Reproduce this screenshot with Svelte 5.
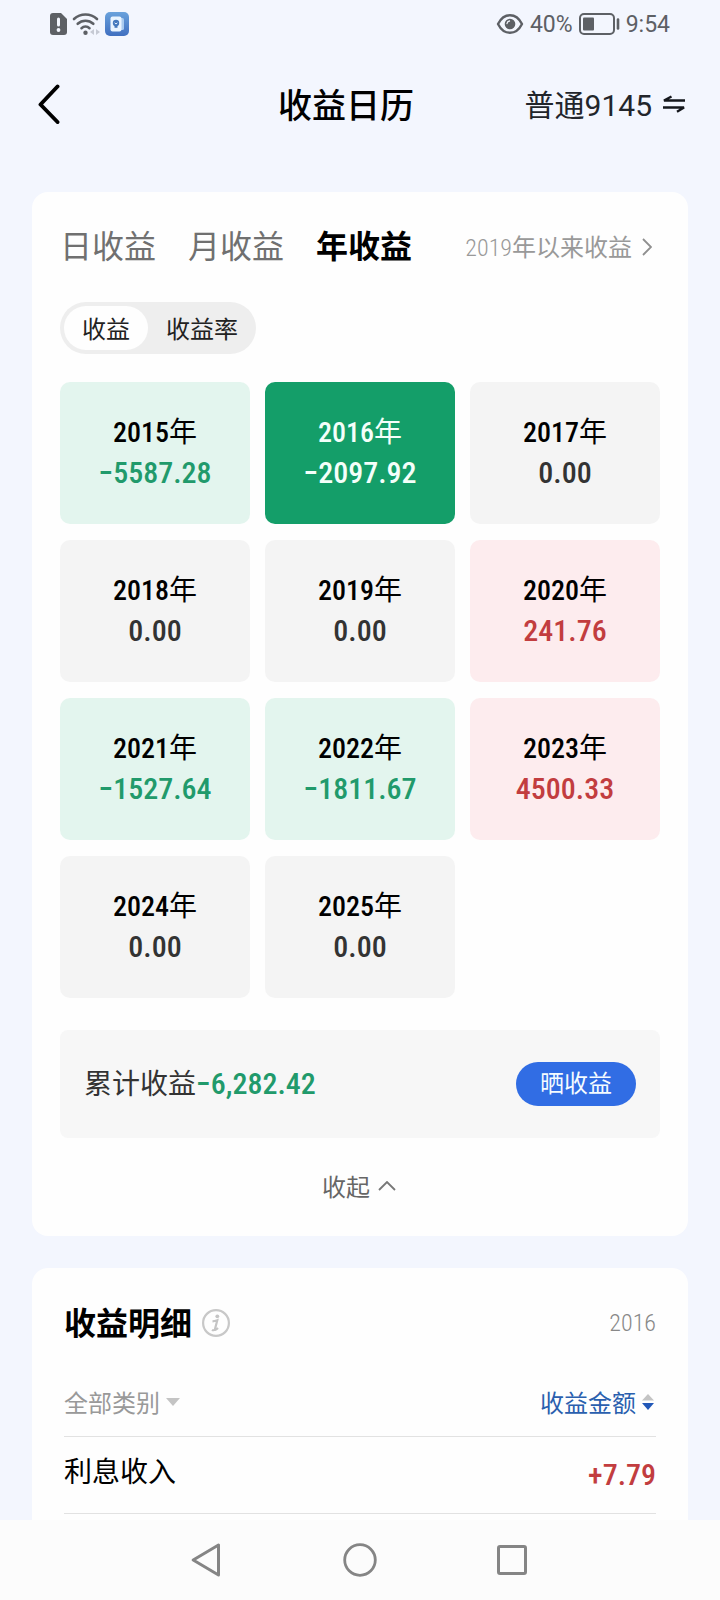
<script>
  const years = [
    { year: 2015, value: -5587.28 },
    { year: 2016, value: -2097.92 },
    { year: 2017, value: 0 },
    { year: 2018, value: 0 },
    { year: 2019, value: 0 },
    { year: 2020, value: 241.76 },
    { year: 2021, value: -1527.64 },
    { year: 2022, value: -1811.67 },
    { year: 2023, value: 4500.33 },
    { year: 2024, value: 0 },
    { year: 2025, value: 0 }
  ];
  const tabs = ['日收益', '月收益', '年收益'];
  const modes = ['收益', '收益率'];

  let selected = $state(2016);
  let tab = $state('年收益');
  let mode = $state('收益');

  const tone = (v) => (v < 0 ? 'loss' : v > 0 ? 'gain' : 'flat');
  const format = (v) => (v < 0 ? '−' : '') + Math.abs(v).toFixed(2);
</script>

<div class="screen">
  <div class="status">
    <div class="status-group left">
      <svg width="17" height="22" viewBox="0 0 17 22">
        <path d="M3 0h8l6 6v13a3 3 0 0 1-3 3H3a3 3 0 0 1-3-3V3a3 3 0 0 1 3-3z" fill="#5d6065" />
        <path d="M8.500 6v6" stroke="#f3f6fe" stroke-width="3" stroke-linecap="round" />
        <circle cx="8.500" cy="17" r="1.900" fill="#f3f6fe" />
      </svg>
      <svg width="28" height="24" viewBox="0 0 28 24">
        <g fill="none" stroke="#5d6065" stroke-width="2.600" stroke-linecap="round">
          <path d="M2 7a17 17 0 0 1 23 0" />
          <path d="M5.700 11.800a11.500 11.500 0 0 1 15.600 0" />
          <path d="M9.500 16.200a6 6 0 0 1 8 0" />
        </g>
        <circle cx="13.500" cy="20.800" r="2.200" fill="#5d6065" />
        <path d="M22 17v6l-4-3zM24 17v6l4-3z" fill="#c6cad4" />
      </svg>
      <svg width="24" height="24" viewBox="0 0 24 24">
        <defs>
          <linearGradient id="app-tile" x1="0" y1="0" x2="0" y2="1">
            <stop offset="0" stop-color="#6aa2dc" />
            <stop offset="1" stop-color="#406fc0" />
          </linearGradient>
        </defs>
        <rect width="24" height="24" rx="5" fill="url(#app-tile)" />
        <rect x="9" y="6" width="10" height="12" rx="1.500" fill="#a9cbf0" />
        <rect x="5.500" y="4.500" width="11" height="15" rx="2" fill="#e9f4ff" />
        <circle cx="11" cy="11" r="3.200" fill="#4478bd" />
        <path d="M9.500 13h3v2.800h-3z" fill="#4478bd" />
        <path d="M9.600 10.800l1.400 1.200 1.400-1.200" fill="none" stroke="#e9f4ff" />
      </svg>
    </div>
    <div class="status-group right">
      <svg width="28" height="22" viewBox="0 0 28 22">
        <path d="M2 11C5 5 9.500 2.200 14 2.200S23 5 26 11c-3 6-7.500 8.800-12 8.800S5 17 2 11z" fill="none" stroke="#5d6065" stroke-width="2.400" stroke-linejoin="round" />
        <circle cx="14" cy="11" r="5.300" fill="#5d6065" />
        <path d="M11 10.500a3 3 0 0 1 2.500-2.500" fill="none" stroke="#f3f6fe" stroke-width="1.300" stroke-linecap="round" />
      </svg>
      <span>40%</span>
      <svg width="41" height="22" viewBox="0 0 41 22">
        <rect x="1" y="1" width="34" height="20" rx="4" fill="none" stroke="#5d6065" stroke-width="2" />
        <rect x="4" y="4.500" width="11" height="13" rx="1" fill="#5d6065" />
        <path d="M39 6.500v9" stroke="#5d6065" stroke-width="2.600" stroke-linecap="round" />
      </svg>
      <span>9:54</span>
    </div>
  </div>

  <main>
    <header>
      <button class="back" aria-label="返回">
        <svg width="22" height="40" viewBox="0 0 22 40">
          <path d="M19.500 2.500L2.500 20.500l17 17.500" fill="none" stroke="#000" stroke-width="3.900" stroke-linecap="round" stroke-linejoin="round" />
        </svg>
      </button>
      <h1>收益日历</h1>
      <button class="account">
        <span>普通<span class="latin">9145</span></span>
        <svg width="24" height="18" viewBox="0 0 24 18">
          <path d="M23 5.500H2L9.500 1.500M1 12.500h21L15 16.800" fill="none" stroke="#15171c" stroke-width="2.400" stroke-linejoin="bevel" />
        </svg>
      </button>
    </header>

    <section class="card calendar">
      <div class="top">
        <nav class="tabs">
          {#each tabs as name}
            <button class:active={tab === name} onclick={() => (tab = name)}>{name}</button>
          {/each}
        </nav>
        <a class="since" href="#since">
          <span><span class="digits">2019</span>年以来收益</span>
          <svg width="10" height="18" viewBox="0 0 10 18">
            <path d="M1 1l8 8-8 8" fill="none" stroke="#8f8f8f" stroke-width="1.800" />
          </svg>
        </a>
      </div>

      <div class="segment">
        {#each modes as name}
          <button class:active={mode === name} onclick={() => (mode = name)}>{name}</button>
        {/each}
      </div>

      <div class="grid">
        {#each years as item}
          <button
            class="cell {tone(item.value)}"
            class:selected={selected === item.year}
            onclick={() => (selected = item.year)}
          >
            <span class="year">{item.year}<span class="unit">年</span></span>
            <span class="value">{format(item.value)}</span>
          </button>
        {/each}
      </div>

      <div class="total">
        <p>累计收益<strong>−6,282.42</strong></p>
        <button>晒收益</button>
      </div>

      <button class="fold">
        <span>收起</span>
        <svg width="18" height="10" viewBox="0 0 18 10">
          <path d="M1 9l8-8 8 8" fill="none" stroke="#777" stroke-width="1.800" />
        </svg>
      </button>
    </section>

    <section class="card details">
      <div class="details-head">
        <h2>收益明细</h2>
        <button class="info" aria-label="说明">
          <svg width="28" height="28" viewBox="0 0 28 28">
            <circle cx="14" cy="14" r="12.900" fill="none" stroke="#c8c8c8" stroke-width="2.200" />
            <circle cx="15.300" cy="7.300" r="1.900" fill="#c4c4c4" />
            <path d="M10.500 12.300c1.600 0 3-.4 4.800-1L13 20c-.3 1.400 1 1 3-1M13 20c-.5 1.500-2 1.500-3 .8" fill="none" stroke="#c4c4c4" stroke-width="2.200" />
          </svg>
        </button>
        <span class="period">2016</span>
      </div>
      <table>
        <thead>
          <tr>
            <th>
              <button class="filter">
                <span>全部类别</span>
                <svg width="14" height="8" viewBox="0 0 14 8"><path d="M0 0h14L7 8z" fill="#c4c4c4" /></svg>
              </button>
            </th>
            <th>
              <button class="filter sort">
                <span>收益金额</span>
                <svg width="12" height="16" viewBox="0 0 12 16">
                  <path d="M0 6.500h12L6 0z" fill="#c4c4c4" />
                  <path d="M0 9h12L6 16z" fill="#2258b8" />
                </svg>
              </button>
            </th>
          </tr>
        </thead>
        <tbody>
          <tr>
            <td>利息收入</td>
            <td class="amount">+7.79</td>
          </tr>
        </tbody>
      </table>
    </section>
  </main>

  <div class="system">
    <button aria-label="后退">
      <svg width="34" height="34" viewBox="0 0 34 34">
        <path d="M27.500 2v30L2.200 17z" fill="none" stroke="#858585" stroke-width="3" stroke-linejoin="round" />
      </svg>
    </button>
    <button aria-label="主页">
      <svg width="34" height="34" viewBox="0 0 34 34">
        <circle cx="17" cy="17" r="15.300" fill="none" stroke="#858585" stroke-width="2.800" />
      </svg>
    </button>
    <button aria-label="最近任务">
      <svg width="34" height="34" viewBox="0 0 34 34">
        <rect x="3.500" y="3.500" width="27" height="27" rx="1.500" fill="none" stroke="#858585" stroke-width="3" />
      </svg>
    </button>
  </div>
</div>

<style>
  :global(body) {
    background: #f3f6fe;
  }
  .screen {
    --cjk: 'Noto Sans CJK SC', sans-serif;
    --digits: 'Roboto Condensed', Roboto, sans-serif;
    display: flex;
    flex-direction: column;
    height: 100vh;
    font-family: var(--cjk);
    color: #000;
  }
  .screen * {
    box-sizing: border-box;
  }
  svg {
    display: block;
    flex: none;
  }
  button {
    margin: 0;
    padding: 0;
    border: 0;
    background: none;
    font: inherit;
    color: inherit;
    cursor: pointer;
    white-space: nowrap;
  }
  h1,
  h2,
  p {
    margin: 0;
  }
  .latin {
    font-family: Roboto, sans-serif;
  }
  .digits {
    font-family: var(--digits);
    font-weight: 300;
  }

  .status {
    flex: none;
    display: flex;
    justify-content: space-between;
    height: 48px;
    padding: 0 50px;
    font-family: Roboto, sans-serif;
    font-size: 23px;
    color: #5d6065;
  }
  .status-group {
    display: flex;
    align-items: center;
    gap: 6px;
  }
  .left {
    gap: 5px;
  }

  main {
    flex: 1;
    min-height: 0;
    overflow: auto;
    scrollbar-width: none;
    padding: 0 32px;
  }
  header {
    display: grid;
    grid-template-columns: 1fr auto 1fr;
    align-items: center;
    height: 112px;
    margin: 0 -32px 32px;
    padding: 0 34px 0 6px;
  }
  .back {
    justify-self: start;
    padding-left: 32px;
  }
  h1 {
    font-size: 34px;
    line-height: 48px;
    font-weight: 500;
  }
  .account {
    justify-self: end;
    display: flex;
    align-items: center;
    gap: 10px;
    font-size: 30px;
    line-height: 40px;
    color: #22252b;
  }

  .card {
    background: #fefefe;
    border-radius: 16px;
  }
  .calendar {
    padding: 28px 28px 30px;
  }
  .top {
    display: flex;
    align-items: flex-start;
    justify-content: space-between;
    padding-right: 8px;
  }
  .tabs {
    display: flex;
    gap: 32px;
    font-size: 32px;
    line-height: 48px;
    color: #707070;
  }
  .tabs .active {
    font-weight: 700;
    color: #000;
  }
  .since {
    display: flex;
    align-items: center;
    gap: 10px;
    font-size: 24px;
    line-height: 52px;
    color: #999;
    text-decoration: none;
  }
  .segment {
    display: flex;
    width: fit-content;
    margin-top: 28px;
    padding: 4px;
    border-radius: 26px;
    background: #eee;
    font-size: 24px;
    line-height: 44px;
    color: #222;
  }
  .segment button {
    padding: 0 14px 0 18px;
    border-radius: 22px;
  }
  .segment .active {
    padding: 0 18px;
    background: #fefefe;
  }

  .grid {
    display: grid;
    grid-template-columns: repeat(3, 1fr);
    gap: 16px 15px;
    margin-top: 28px;
  }
  .cell {
    display: flex;
    flex-direction: column;
    align-items: center;
    justify-content: center;
    height: 142px;
    border-radius: 10px;
    line-height: 40px;
    font-family: var(--digits);
    background: #f4f4f4;
  }
  .year {
    font-size: 28px;
    font-weight: 500;
  }
  .unit {
    font-family: var(--cjk);
    font-weight: 400;
    line-height: 30px;
  }
  .value {
    font-size: 30px;
    font-weight: 500;
    color: #333;
  }
  .loss {
    background: #e3f5ee;
  }
  .loss .value {
    color: #219a6b;
  }
  .gain {
    background: #fdecee;
  }
  .gain .value {
    color: #c23d3f;
  }
  .cell.selected {
    background: #149e69;
  }
  .cell.selected .year,
  .cell.selected .value {
    color: #f4fffa;
  }

  .total {
    display: flex;
    align-items: center;
    justify-content: space-between;
    height: 108px;
    margin-top: 32px;
    padding: 0 24px;
    border-radius: 8px;
    background: #f7f7f7;
  }
  .total p {
    padding-bottom: 4px;
    font-size: 28px;
    line-height: 40px;
    color: #333;
  }
  .total strong {
    font-family: var(--digits);
    font-size: 30px;
    font-weight: 500;
    line-height: 30px;
    color: #219a6b;
  }
  .total button {
    width: 120px;
    padding-bottom: 4px;
    border-radius: 22px;
    background: #316de4;
    font-size: 24px;
    line-height: 40px;
    color: #f4fbff;
  }
  .fold {
    display: flex;
    align-items: center;
    gap: 8px;
    margin: 28px auto 0;
    padding-right: 2px;
    font-size: 24px;
    line-height: 40px;
    color: #666;
  }

  .details {
    margin-top: 32px;
    padding: 28px 32px 40px;
  }
  .details-head {
    display: flex;
    align-items: center;
    gap: 10px;
    height: 54px;
  }
  h2 {
    padding-bottom: 4px;
    font-size: 32px;
    line-height: 48px;
    font-weight: 700;
  }
  .period {
    margin-left: auto;
    font-family: var(--digits);
    font-size: 24px;
    font-weight: 300;
    line-height: 28px;
    color: #888;
  }
  table {
    width: 100%;
    margin-top: 18px;
    border-collapse: collapse;
  }
  th,
  td {
    padding: 0;
    border-bottom: 1px solid #e2e2e2;
    text-align: left;
    font-weight: 400;
  }
  th {
    height: 68px;
  }
  td {
    height: 77px;
    padding-bottom: 10px;
    font-size: 28px;
    line-height: 40px;
  }
  .filter {
    display: flex;
    align-items: center;
    gap: 6px;
    font-size: 24px;
    line-height: 40px;
    color: #999;
  }
  .sort {
    margin-left: auto;
    padding-right: 2px;
    color: #2a5fae;
  }
  .amount {
    padding: 0;
    text-align: right;
    font-family: var(--digits);
    font-size: 30px;
    font-weight: 500;
    color: #c23d3f;
  }

  .system {
    flex: none;
    display: flex;
    align-items: center;
    justify-content: center;
    gap: 118px;
    height: 80px;
    background: #fcfcfc;
  }
</style>
